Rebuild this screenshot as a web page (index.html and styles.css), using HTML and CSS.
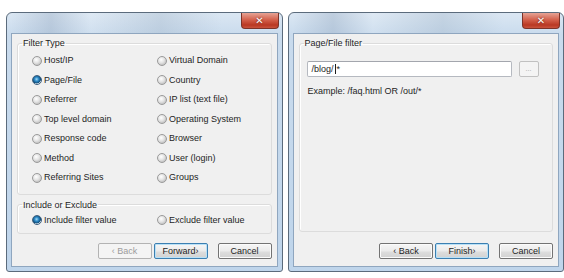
FILE: index.html
```html
<!DOCTYPE html>
<html>
<head>
<title>Filter wizard</title>
<link rel="stylesheet" href="styles.css">
</head>
<body>
  <div class="desk">
    <div class="window">
      <div class="titlebar">
        <span class="close">&#x2715;</span>
      </div>
      <div class="client">
        <fieldset class="group">
          <legend>Filter Type</legend>
          <div class="choices">
            <label class="radio"><span class="dot"></span>Host/IP</label>
            <label class="radio"><span class="dot"></span>Virtual Domain</label>
            <label class="radio"><span class="dot on"></span>Page/File</label>
            <label class="radio"><span class="dot"></span>Country</label>
            <label class="radio"><span class="dot"></span>Referrer</label>
            <label class="radio"><span class="dot"></span>IP list (text file)</label>
            <label class="radio"><span class="dot"></span>Top level domain</label>
            <label class="radio"><span class="dot"></span>Operating System</label>
            <label class="radio"><span class="dot"></span>Response code</label>
            <label class="radio"><span class="dot"></span>Browser</label>
            <label class="radio"><span class="dot"></span>Method</label>
            <label class="radio"><span class="dot"></span>User (login)</label>
            <label class="radio"><span class="dot"></span>Referring Sites</label>
            <label class="radio"><span class="dot"></span>Groups</label>
          </div>
        </fieldset>
        <fieldset class="group small">
          <legend>Include or Exclude</legend>
          <div class="choices one">
            <label class="radio"><span class="dot on"></span>Include filter value</label>
            <label class="radio"><span class="dot"></span>Exclude filter value</label>
          </div>
        </fieldset>
        <div class="buttons">
          <span class="btn disabled">&lsaquo; Back</span>
          <span class="btn default">Forward&rsaquo;</span>
          <span class="btn cancel">Cancel</span>
        </div>
      </div>
    </div>

    <div class="window">
      <div class="titlebar">
        <span class="close">&#x2715;</span>
      </div>
      <div class="client">
        <fieldset class="group tall">
          <legend>Page/File filter</legend>
          <div class="field-row">
            <div class="textbox">/blog/<span class="caret"></span>*</div>
            <span class="browse">...</span>
          </div>
          <p class="hint">Example: /faq.html OR /out/*</p>
        </fieldset>
        <div class="buttons">
          <span class="btn">&lsaquo; Back</span>
          <span class="btn default">Finish&rsaquo;</span>
          <span class="btn cancel">Cancel</span>
        </div>
      </div>
    </div>
  </div>
</body>
</html>
```

FILE: styles.css
```css
body {
  margin: 0;
  background: #ffffff;
  font: 9px/11px "Liberation Sans", Arial, sans-serif;
  color: #1e1e1e;
}

.desk {
  display: flex;
  gap: 5px;
  padding: 12px 0 0 6px;
}

.window {
  width: 272px;
  height: 254px;
  border: 1px solid #5b6b7c;
  border-radius: 6px 6px 3px 3px;
  background: linear-gradient(180deg, #dbe7f3 0px, #c9dbed 22px, #bfd5eb 100%);
  padding: 0 4px 4px 4px;
  display: flex;
  flex-direction: column;
}

.titlebar {
  height: 20px;
  flex: none;
  display: flex;
  justify-content: flex-end;
  align-items: flex-start;
  margin-right: -1px;
  background: linear-gradient(90deg, rgba(255,255,255,0) 0px, rgba(140,160,185,0.35) 40px, rgba(255,255,255,0.1) 80px, rgba(150,170,190,0.3) 150px, rgba(255,255,255,0) 210px);
}

.close {
  width: 36px;
  height: 15px;
  border: 1px solid #7d3328;
  border-top: none;
  border-radius: 0 0 4px 4px;
  background: linear-gradient(180deg, #e6a395 0px, #d35f4a 7px, #b93823 12px, #c9533d 100%);
  color: #ffffff;
  font: bold 10px/15px "DejaVu Sans", sans-serif;
  text-align: center;
  text-shadow: 0 0 2px #5a1a10;
}

.client {
  flex: 1;
  background: #f0f0f0;
  border: 1px solid #8fa6bf;
  padding: 4px 5px 7px 5px;
  display: flex;
  flex-direction: column;
}

.group {
  margin: 0;
  padding: 0;
  border: 1px solid #dcdcdc;
  border-radius: 3px;
  box-shadow: inset 1px 1px 0 #ffffff;
}

.group legend {
  margin-left: 4px;
  padding: 0 1px;
  line-height: 10px;
}

.choices {
  display: grid;
  grid-template-columns: 125px 1fr;
  grid-auto-rows: 19.5px;
  padding: 3px 0 6px 14px;
}

.choices.one {
  grid-auto-rows: 19px;
  padding: 1px 0 3px 14px;
}

.small {
  margin-top: 5px;
}

.radio {
  display: flex;
  align-items: center;
  gap: 2px;
}

.dot {
  width: 8px;
  height: 8px;
  border-radius: 50%;
  border: 1px solid #9a9a9a;
  background: radial-gradient(circle at 40% 35%, #ffffff 0px, #e4e4e4 3px, #c8c8c8 5px);
}

.dot.on {
  border-color: #3f5f7d;
  background: radial-gradient(circle at 45% 40%, #a7dcf7 0px, #2d8bc8 2px, #124e7a 4px, #d9e6ef 4.5px);
}

.buttons {
  margin-top: auto;
  display: flex;
  justify-content: flex-end;
  gap: 2px;
}

.btn {
  width: 52px;
  height: 14px;
  border: 1px solid #737373;
  border-radius: 2px;
  background: linear-gradient(180deg, #f6f6f6 0px, #ebebeb 7px, #dddddd 8px, #d2d2d2 100%);
  box-shadow: inset 0 0 0 1px #fbfbfb;
  text-align: center;
  line-height: 14px;
}

.btn.default {
  border-color: #3c7fb1;
  box-shadow: inset 0 0 0 1px #b9e1f7;
}

.btn.disabled {
  color: #9c9c9c;
  border-color: #b3b3b3;
  background: #f4f4f4;
  box-shadow: none;
}

.btn.cancel {
  margin-left: 8px;
}

.tall {
  flex: 1;
  margin-bottom: 11px;
}

.field-row {
  display: flex;
  align-items: center;
  gap: 7px;
  padding: 13px 0 0 7px;
}

.textbox {
  width: 199px;
  height: 14px;
  border: 1px solid #b5b9c0;
  border-top-color: #a3a6ad;
  border-radius: 2px;
  background: #ffffff;
  padding-left: 4px;
  line-height: 14px;
  display: flex;
  align-items: center;
}

.caret {
  width: 1px;
  height: 10px;
  background: #1e1e1e;
  margin: 0 1px;
}

.browse {
  width: 18px;
  height: 14px;
  border: 1px solid #c1c1c1;
  border-radius: 2px;
  background: #f4f4f4;
  color: #a0a0a0;
  font-size: 7px;
  text-align: center;
  line-height: 14px;
}

.hint {
  margin: 9px 0 0 8px;
}
```
